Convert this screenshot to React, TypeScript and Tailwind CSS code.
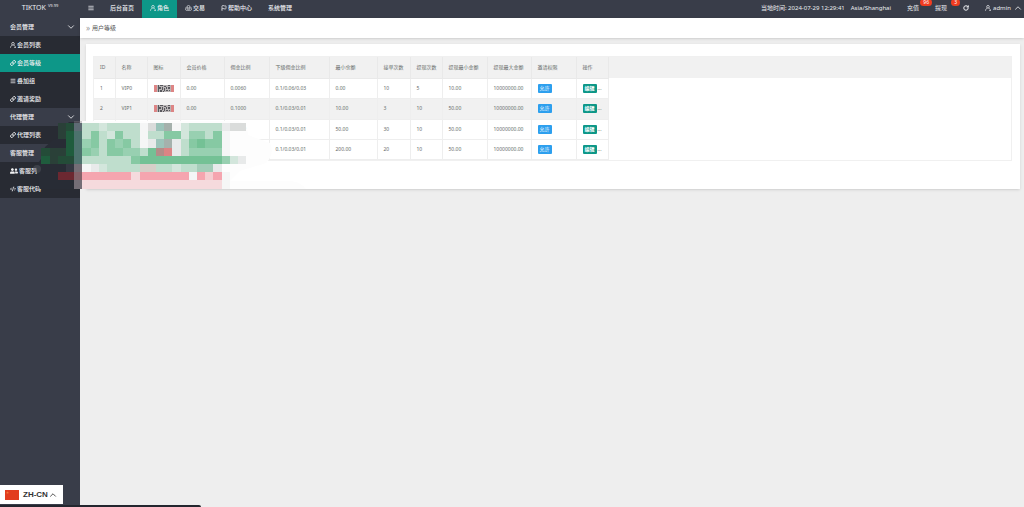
import { useState } from 'react'
import type { ReactNode } from 'react'
import { ChevronDown, ChevronUp, CodeXml, Flag, Link, Menu, RotateCw, TextAlignJustify } from 'lucide-react'
import { FaUserFriends } from 'react-icons/fa'

interface Level {
    id: number
    name: string
    price: string
    rate: string
    subRate: string
    minBalance: string
    orders: number
    withdrawTimes: number
    withdrawMin: string
    withdrawMax: string
}

const LEVELS: Level[] = [
    { id: 1, name: 'VIP0', price: '0.00', rate: '0.0060', subRate: '0.1/0.06/0.03', minBalance: '0.00', orders: 10, withdrawTimes: 5, withdrawMin: '10.00', withdrawMax: '10000000.00' },
    { id: 2, name: 'VIP1', price: '0.00', rate: '0.1000', subRate: '0.1/0.03/0.01', minBalance: '10.00', orders: 3, withdrawTimes: 10, withdrawMin: '50.00', withdrawMax: '10000000.00' },
    { id: 3, name: 'VIP2', price: '0.00', rate: '0.1000', subRate: '0.1/0.03/0.01', minBalance: '50.00', orders: 30, withdrawTimes: 10, withdrawMin: '50.00', withdrawMax: '10000000.00' },
    { id: 4, name: 'VIP3', price: '0.00', rate: '0.1000', subRate: '0.1/0.03/0.01', minBalance: '200.00', orders: 20, withdrawTimes: 10, withdrawMin: '50.00', withdrawMax: '10000000.00' },
]

const COLUMNS = [
    { title: 'ID', width: 'w-[21px]' },
    { title: '名称', width: 'w-[32px]' },
    { title: '图标', width: 'w-[33px]' },
    { title: '会员价格', width: 'w-[44px]' },
    { title: '佣金比例', width: 'w-[45px]' },
    { title: '下级佣金比例', width: 'w-[60px]' },
    { title: '最小余额', width: 'w-[48px]' },
    { title: '接单次数', width: 'w-[33px]' },
    { title: '提现次数', width: 'w-[32px]' },
    { title: '提现最小金额', width: 'w-[45px]' },
    { title: '提现最大金额', width: 'w-[44px]' },
    { title: '邀请权限', width: 'w-[45px]' },
    { title: '操作', width: 'w-[32px]' },
]

const UserIcon = () => (
    <svg viewBox="0 0 12 12" className="h-[6px] w-[6px] shrink-0" fill="none" stroke="currentColor" strokeWidth="1.4">
        <circle cx="6" cy="3.6" r="2.7" />
        <path d="M1 11.5c.3-3 1.700-4.600 3.600-5.300M11 11.500c-.3-3-1.700-4.600-3.600-5.300M8.500 11H11" />
    </svg>
)

const TradeIcon = () => (
    <svg viewBox="0 0 14 12" className="h-[6px] w-[7px] shrink-0" fill="none" stroke="currentColor" strokeWidth="1.3">
        <circle cx="7" cy="3.300" r="2.500" />
        <circle cx="3.500" cy="8.300" r="2.500" />
        <circle cx="10.500" cy="8.300" r="2.500" />
        <path d="M3 3.500 1.500 5.500M11 3.500l1.500 2M5 11.300h4" />
    </svg>
)

const LevelImage = () => (
    <svg viewBox="0 0 20 7" className="h-[7px] w-[20px]" shapeRendering="crispEdges">
        <rect width="20" height="7" fill="#b9b5b6" />
        <rect width="3" height="7" fill="#dd8585" />
        <rect x="17" width="3" height="7" fill="#dd8585" />
        <path
            d="M4 0h1v7h-1zM6 0h3v1h-3zM5 2h2v2h-2zM8 2h1v3h-1zM6 5h2v2h-2zM10 1h2v1h-2zM10 3h1v3h-1zM12 2h1v2h-1zM12 5h2v1h-2zM14 0h2v1h-2zM14 2h2v2h-2zM15 5h1v1h-1zM9 6h1v1h-1z"
            fill="#59595e"
        />
    </svg>
)

const NavItem = ({ children, active = false }: { children: ReactNode; active?: boolean }) => (
    <a href="#" className={`flex h-full items-center gap-px px-2 pb-[2px] whitespace-nowrap ${active ? 'bg-[#0d9788]' : ''}`}>
        {children}
    </a>
)

const Badge = ({ children }: { children: ReactNode }) => (
    <span className="absolute -top-px -right-[5px] h-[7px] rounded-full bg-[#f03c20] px-[3px] text-[5px] leading-[7px] text-white">
        {children}
    </span>
)

const TopBar = () => (
    <header className="flex h-[18px] bg-[#393d49] text-[6px] leading-none text-[#eceef1]">
        <div className="flex w-20 shrink-0 items-start justify-center gap-[2px] pt-1 text-[7px] leading-[8px]">
            TIKTOK <sup className="top-0 text-[4px] leading-[4px]">V9.99</sup>
        </div>
        <nav className="flex grow font-medium">
            <NavItem><TextAlignJustify size={6} strokeWidth={3} /></NavItem>
            <NavItem>后台首页</NavItem>
            <NavItem active><UserIcon />角色</NavItem>
            <NavItem><TradeIcon />交易</NavItem>
            <NavItem><Flag size={6} strokeWidth={3} />帮助中心</NavItem>
            <NavItem>系统管理</NavItem>
        </nav>
        <div className="flex h-4 items-center whitespace-nowrap">
            <span>当地时间: 2024-07-29 12:29:41</span>
            <span className="pr-2 pl-[6px]">Asia/Shanghai</span>
            <a href="#" className="relative flex h-full items-center px-2">充值<Badge>96</Badge></a>
            <a href="#" className="relative flex h-full items-center px-2">提现<Badge>3</Badge></a>
            <button type="button" aria-label="刷新" className="px-2"><RotateCw size={6} strokeWidth={4} /></button>
            <button type="button" className="flex items-center gap-[2px] pr-px pl-2">
                <UserIcon />admin<ChevronUp size={10} />
            </button>
        </div>
    </header>
)

const MenuGroup = ({ title, children }: { title: string; children: ReactNode }) => {
    const [open, setOpen] = useState(true)
    return (
        <div>
            <button
                type="button"
                onClick={() => setOpen(!open)}
                className="flex h-[18px] w-full items-center justify-between pr-1 pl-[10px]"
            >
                {title}
                <ChevronDown size={10} />
            </button>
            {open && <div className="bg-[#282b33]">{children}</div>}
        </div>
    )
}

const MenuLink = ({ icon, children, active = false }: { icon: ReactNode; children: ReactNode; active?: boolean }) => (
    <a href="#" className={`flex h-[18px] items-center gap-px pl-[10px] ${active ? 'bg-[#0d9788]' : ''}`}>
        {icon}
        {children}
    </a>
)

const Sidebar = () => (
    <aside className="w-20 shrink-0 bg-[#393d49] text-[6px] leading-none font-medium text-[#f1f2f4]">
        <MenuGroup title="会员管理">
            <MenuLink icon={<UserIcon />}>会员列表</MenuLink>
            <MenuLink icon={<Link size={6} strokeWidth={4} />} active>会员等级</MenuLink>
            <MenuLink icon={<Menu size={6} strokeWidth={3} />}>叠加组</MenuLink>
            <MenuLink icon={<Link size={6} strokeWidth={4} />}>邀请奖励</MenuLink>
        </MenuGroup>
        <MenuGroup title="代理管理">
            <MenuLink icon={<Link size={6} strokeWidth={4} />}>代理列表</MenuLink>
        </MenuGroup>
        <MenuGroup title="客服管理">
            <MenuLink icon={<FaUserFriends size={8} />}>客服列表</MenuLink>
            <MenuLink icon={<CodeXml size={6} strokeWidth={3} />}>客服代码</MenuLink>
        </MenuGroup>
    </aside>
)

const LevelTable = () => (
    <div className="border border-[#f0f0f0]">
        <table className="w-full table-fixed border-collapse text-left text-[5px] leading-none whitespace-nowrap text-[#666c6a]">
            <thead>
                <tr className="h-[21px] bg-[#f1f1f1]">
                    {COLUMNS.map(col => (
                        <th key={col.title} className={`${col.width} border-r border-b border-[#e9e9e9] p-0 pl-[6px] font-normal`}>
                            {col.title}
                        </th>
                    ))}
                    <td className="p-0" />
                </tr>
            </thead>
            <tbody>
                {LEVELS.map(level => (
                    <tr
                        key={level.id}
                        className={`*:border-[#eeeeee] *:p-0 *:pl-[6px] *:not-last:border-r *:not-last:border-b ${level.id === 2 ? 'h-[21px] *:not-last:bg-[#f1f1f1]' : 'h-5'}`}
                    >
                        <td>{level.id}</td>
                        <td>{level.name}</td>
                        <td><LevelImage /></td>
                        <td>{level.price}</td>
                        <td>{level.rate}</td>
                        <td>{level.subRate}</td>
                        <td>{level.minBalance}</td>
                        <td>{level.orders}</td>
                        <td>{level.withdrawTimes}</td>
                        <td>{level.withdrawMin}</td>
                        <td>{level.withdrawMax}</td>
                        <td>
                            <button type="button" className="block h-[9px] w-[14px] rounded-[1px] bg-[#2d9fee] text-center text-white">允许</button>
                        </td>
                        <td>
                            <div className="flex items-center gap-px">
                                <button type="button" className="h-[9px] w-[14px] rounded-[1px] bg-[#0d9788] text-center font-bold text-white">编辑</button>
                                <span>...</span>
                            </div>
                        </td>
                        <td />
                    </tr>
                ))}
            </tbody>
        </table>
    </div>
)

const MOSAIC_COLORS: Record<string, string> = {
    a: '#2a4038', b: '#244c38', c: '#1f5c3d', d: '#2b6a60', e: '#48606a',
    g: '#bfdecd', h: '#d3e6dc', i: '#86c9a3', j: '#98d0b1', k: '#74c195',
    w: '#f5f6f6', x: '#e8eaea', y: '#dadcdb', t: '#9cc4ba', u: '#a5b1ac',
    m: '#b48c88', r: '#dc8484', n: '#d6cfc8', s: '#a3cdb8',
    D: '#343842', E: '#69656e', R: '#6c2831', S: '#82505a', p: '#f5a5af', q: '#f5cdd1', v: '#f5dadd',
}

const MOSAIC_ROWS = [
    '..abegghggggwytuwhggggxyy',
    '..acdgighiggwggiihjjgiw..',
    '...cdjigijigwxtuxgikiiw..',
    'baacdijgiijjgkmrxgjjjjw..',
    'cabbdggggggikkkkkkkkkkjhx',
    '...DEwxhggggnngghggssx...',
    '..RRSppppppvppppppwpqpw..',
    '....Evvvvvvvvvvvvvvvvvw..',
]

const Mosaic = () => (
    <svg viewBox="0 0 310 80" className="pointer-events-none absolute top-[115px] left-0 h-[80px] w-[310px]">
        <path d="M40 74q-3-6-1-12l-2-4-1-7 5-7 4-12 8-7 12-4 0-10 4-4h10v67z" fill="#282c35" />
        <path d="M82 6H238q10 3 10 14l22 8q5 12-4 20l-26 8-10 10h62q10 2 14 8L82 74z" fill="#fdfdfd" />
        <g shapeRendering="crispEdges">
            {MOSAIC_ROWS.map((row, r) =>
                row.split('').map((c, i) => c !== '.' && (
                    <rect key={`${r}-${i}`} x={41.4 + i * 8.19} y={8 + r * 8.2} width="8.19" height="8.2" fill={MOSAIC_COLORS[c]} />
                )),
            )}
        </g>
        <rect x="74" y="6" width="8" height="68" fill="#8a8088" opacity=".35" />
        <circle cx="37" cy="54" r="4" fill="#6c6f78" opacity=".3" />
    </svg>
)

const LanguageSwitch = () => (
    <button
        type="button"
        className="fixed bottom-[3px] left-0 flex h-[19px] w-[63px] items-center bg-white pl-[5px] font-['Liberation_Sans',sans-serif] text-[8px] font-bold text-[#333]"
    >
        <svg viewBox="0 0 14 10" className="mr-1 h-[10px] w-[14px]">
            <rect width="14" height="10" fill="#e23c1e" />
            <path d="m2.500 1.200.4 1h1l-.8.700.3 1-.9-.6-.9.600.3-1-.8-.7h1z" fill="#f0803a" />
        </svg>
        ZH-CN
        <ChevronUp size={10} />
    </button>
)

export default function App() {
    return (
        <div className="relative flex min-h-screen flex-col bg-[#eeeeee] font-['Noto_Sans','Noto_Sans_CJK_SC',sans-serif]">
            <TopBar />
            <div className="flex grow">
                <Sidebar />
                <main className="min-w-0 grow">
                    <div className="flex h-5 items-center gap-[2px] bg-white px-[6px] text-[6px] text-[#555] shadow-sm">
                        <span className="text-[8px] leading-none text-[#999]">»</span>
                        用户等级
                    </div>
                    <section className="mt-[6px] mr-1 ml-[6px] bg-white pt-3 pr-2 pb-[28px] pl-[7px] shadow-sm">
                        <LevelTable />
                    </section>
                </main>
            </div>
            <Mosaic />
            <LanguageSwitch />
            <div className="fixed bottom-0 left-0 h-[2px] w-[201px] rounded-tr-sm bg-[#23262e]" />
        </div>
    )
}
